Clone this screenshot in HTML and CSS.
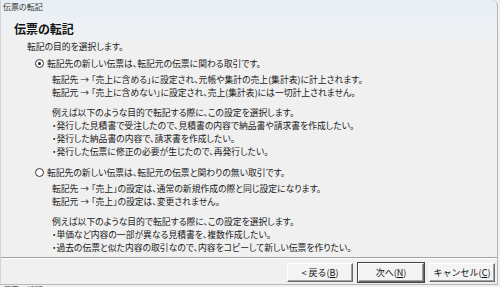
FILE: index.html
```html
<!DOCTYPE html>
<html lang="ja">
<head>
    <meta charset="UTF-8">
    <title>伝票の転記</title>
    <link rel="stylesheet" href="styles.css">
</head>
<body>

    <div class="window">
        <div class="title">伝票の転記</div>

        <div class="content">
            <h1>伝票の転記</h1>
            <p class="lead">転記の目的を選択します。</p>

            <div class="option">
                <label class="radio-row">
                    <span class="radio checked"></span>
                    転記先の新しい伝票は、転記元の伝票に関わる取引です。
                </label>
                <div class="detail">
                    <p>転記先 → 「売上に含める」に設定され、元帳や集計の売上(集計表)に計上されます。<br>
                    転記元 → 「売上に含めない」に設定され、売上(集計表)には一切計上されません。</p>
                    <p>例えば以下のような目的で転記する際に、この設定を選択します。<br>
                    ・発行した見積書で受注したので、見積書の内容で納品書や請求書を作成したい。<br>
                    ・発行した納品書の内容で、請求書を作成したい。<br>
                    ・発行した伝票に修正の必要が生じたので、再発行したい。</p>
                </div>
            </div>

            <div class="option">
                <label class="radio-row">
                    <span class="radio"></span>
                    転記先の新しい伝票は、転記元の伝票と関わりの無い取引です。
                </label>
                <div class="detail">
                    <p>転記先 → 「売上」の設定は、通常の新規作成の際と同じ設定になります。<br>
                    転記元 → 「売上」の設定は、変更されません。</p>
                    <p>例えば以下のような目的で転記する際に、この設定を選択します。<br>
                    ・単価など内容の一部が異なる見積書を、複数作成したい。<br>
                    ・過去の伝票と似た内容の取引なので、内容をコピーして新しい伝票を作りたい。</p>
                </div>
            </div>
        </div>

        <div class="footer">
            <button class="btn">&lt; 戻る(<u>B</u>)</button>
            <button class="btn default">次へ(<u>N</u>)</button>
            <button class="btn">キャンセル(<u>C</u>)</button>
        </div>
    </div>

    <div class="task">伝票の転記</div>

</body>
</html>
```

FILE: styles.css
```css
html, body {
    margin: 0;
    height: 287px;
    overflow: hidden;
    background: #f0f0f0;
}
body {
    font-family: "Noto Sans CJK JP", "Noto Sans", sans-serif;
    font-feature-settings: "palt";
    color: #1a1a1a;
}
.window {
    height: 284px;
    margin-right: 2px;
    border-left: 1px solid #d4d4d4;
    border-right: 1px solid #b8b8b8;
    border-bottom: 1px solid #b8b8b8;
    border-top-right-radius: 6px;
    background: linear-gradient(#e8eef5 0, #eef1f4 30px, #f0f0f0 50px);
    display: flex;
    flex-direction: column;
}
.title {
    height: 14px;
    line-height: 14px;
    padding-left: 2px;
    font-size: 8px;
    color: #333;
}
.content {
    flex: 1;
    min-height: 0;
    padding-left: 13px;
    font-size: 8.8px;
    line-height: 13px;
}
h1 {
    margin: 8px 0 0;
    font-size: 12px;
    line-height: 14px;
    font-weight: bold;
    color: #111;
}
.lead {
    margin: 4px 0 0 13px;
}
.option {
    margin: 4px 0 0 21px;
}
.option + .option {
    margin-top: 8px;
}
.radio-row {
    display: flex;
    align-items: center;
    gap: 1px;
}
.radio {
    width: 7px;
    height: 7px;
    border: 1px solid #333;
    border-radius: 50%;
    background: #fff;
    margin-right: 2px;
    position: relative;
}
.radio.checked::after {
    content: "";
    position: absolute;
    left: 2px;
    top: 2px;
    width: 3px;
    height: 3px;
    border-radius: 50%;
    background: #222;
}
.detail {
    margin: 3px 0 0 17px;
}
.detail p {
    margin: 0;
}
.detail p + p {
    margin-top: 7px;
}
.footer {
    flex: none;
    height: 21px;
    border-top: 1px solid #a0a0a0;
    box-shadow: inset 0 1px 0 #fff;
    display: flex;
    justify-content: flex-end;
    align-items: flex-start;
    gap: 5px;
    padding: 5px 2px 0 0;
}
.btn {
    width: 66px;
    height: 19px;
    padding: 0;
    font-family: inherit;
    font-size: 9px;
    color: #111;
    background: #f3f3f3;
    border: 1px solid;
    border-color: #fff #6a6a6a #6a6a6a #fff;
    box-shadow: inset -1px -1px 0 #a0a0a0;
}
.btn u {
    text-decoration: underline;
}
.btn.default {
    outline: 1px solid #444;
}
.task {
    padding-left: 3px;
    font-size: 8px;
    line-height: 10px;
    color: #333;
}
```
